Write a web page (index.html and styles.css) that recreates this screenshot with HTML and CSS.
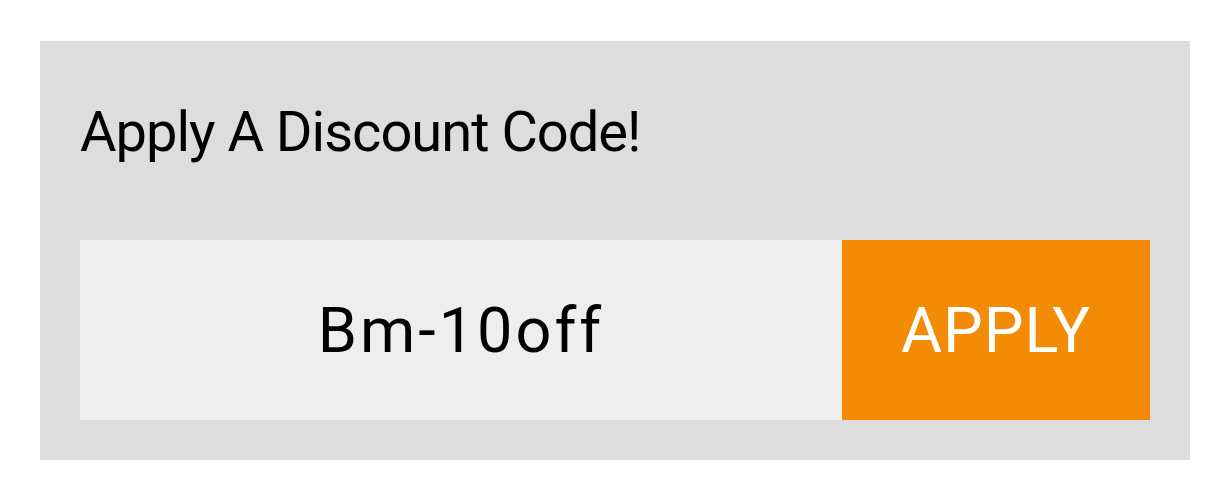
FILE: index.html
```html
<!DOCTYPE html>
<html lang="en">
<head>
    <meta charset="UTF-8">
    <meta name="viewport" content="width=device-width, initial-scale=1.0">
    <title>Discount Code</title>
    <link rel="stylesheet" href="styles.css">
</head>
<body>
    <!-- Discount box -->
    <div class="discount">
        <h2 class="discount-title">Apply A Discount Code!</h2>

        <form class="discount-form" onsubmit="return false;">
            <input type="text" class="discount-input" value="Bm-10off" aria-label="Discount code">
            <button type="submit" class="discount-btn">APPLY</button>
        </form>
    </div>
</body>
</html>
```
FILE: styles.css
```css
/* Page */
body {
    margin: 0;
    padding: 41px 0 0 40px;
    background-color: white;
    font-family: Roboto, "Liberation Sans", sans-serif;
}

/* Discount box */
.discount {
    box-sizing: border-box;
    width: 1150px;
    height: 419px;
    padding: 40px;
    background-color: #dddddd;
}

.discount-title {
    margin: 18px 0 0;
    font-size: 56px;
    font-weight: 400;
    letter-spacing: -1px;
    line-height: 1.2;
    color: black;
}

.discount-form {
    display: flex;
    height: 180px;
    margin-top: 74px;
}

.discount-input {
    flex: 1;
    min-width: 0;
    margin: 0;
    padding: 0;
    border: none;
    outline: none;
    background-color: #eeeeee;
    font-family: inherit;
    font-size: 63px;
    letter-spacing: 3px;
    color: black;
    text-align: center;
}

.discount-btn {
    width: 308px;
    margin: 0;
    padding: 0;
    border: none;
    background-color: #f38b05;
    font-family: inherit;
    font-size: 63px;
    letter-spacing: 1px;
    color: white;
    cursor: pointer;
}
```
